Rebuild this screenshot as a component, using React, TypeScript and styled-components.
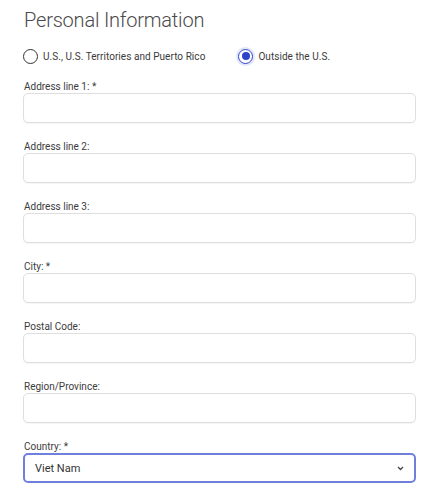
import styled, { createGlobalStyle } from "styled-components";

const GlobalStyle = createGlobalStyle`
  html, body {
    margin: 0;
    padding: 0;
    background: #ffffff;
    font-family: Roboto, "Liberation Sans", Arial, sans-serif;
  }
`;

const Page = styled.div`
  width: 393px;
  padding: 7px 0 0 23px;
`;

const Title = styled.h1`
  margin: 0 0 0 1px;
  font-size: 20px;
  line-height: 26px;
  font-weight: 300;
  letter-spacing: -0.2px;
  color: #4a4a4a;
`;

const RadioRow = styled.div`
  display: flex;
  align-items: center;
  gap: 33px;
  height: 16px;
  margin-top: 15px;
`;

const RadioOption = styled.label`
  display: flex;
  align-items: center;
  gap: 5px;
  font-size: 10px;
  letter-spacing: 0.05px;
  color: #3a3a3a;
`;

const RadioCircle = styled.span<{ checked: boolean }>`
  box-sizing: border-box;
  width: 15px;
  height: 15px;
  border-radius: 50%;
  border: 1.5px solid ${({ checked }) => (checked ? "#2d44c9" : "#333")};
  display: flex;
  align-items: center;
  justify-content: center;
  box-shadow: ${({ checked }) => (checked ? "0 0 0 2px rgba(90, 110, 220, 0.18)" : "none")};

  &::after {
    content: "";
    width: 8px;
    height: 8px;
    border-radius: 50%;
    background: #2d44c9;
    display: ${({ checked }) => (checked ? "block" : "none")};
  }
`;

const Form = styled.div`
  display: flex;
  flex-direction: column;
  gap: 17px;
  margin-top: 16px;
`;

const Field = styled.div`
  display: flex;
  flex-direction: column;
`;

const Label = styled.div`
  font-size: 10px;
  line-height: 13px;
  color: #3c3c3c;
  padding-left: 1px;
`;

const Input = styled.div`
  box-sizing: border-box;
  height: 30px;
  border: 1px solid #dedede;
  border-radius: 5px;
  box-shadow: 0 1px 1px rgba(0, 0, 0, 0.04);
`;

const Select = styled.div`
  box-sizing: border-box;
  height: 30px;
  border: 2px solid #6f80dc;
  border-radius: 5px;
  display: flex;
  align-items: center;
  justify-content: space-between;
  padding: 0 10px 0 10px;
  font-size: 11px;
  color: #333;
`;

const Chevron = () => (
  <svg width="7" height="5" viewBox="0 0 7 5">
    <path d="M1 1 L3.5 3.5 L6 1" fill="none" stroke="#444" strokeWidth="1.3" />
  </svg>
);

const fields = [
  "Address line 1: *",
  "Address line 2:",
  "Address line 3:",
  "City: *",
  "Postal Code:",
  "Region/Province:",
];

export default function App() {
  return (
    <Page>
      <GlobalStyle />
      <Title>Personal Information</Title>
      <RadioRow>
        <RadioOption>
          <RadioCircle checked={false} />
          U.S., U.S. Territories and Puerto Rico
        </RadioOption>
        <RadioOption>
          <RadioCircle checked={true} />
          Outside the U.S.
        </RadioOption>
      </RadioRow>
      <Form>
        {fields.map((f) => (
          <Field key={f}>
            <Label>{f}</Label>
            <Input />
          </Field>
        ))}
        <Field>
          <Label>Country: *</Label>
          <Select>
            Viet Nam
            <Chevron />
          </Select>
        </Field>
      </Form>
    </Page>
  );
}
